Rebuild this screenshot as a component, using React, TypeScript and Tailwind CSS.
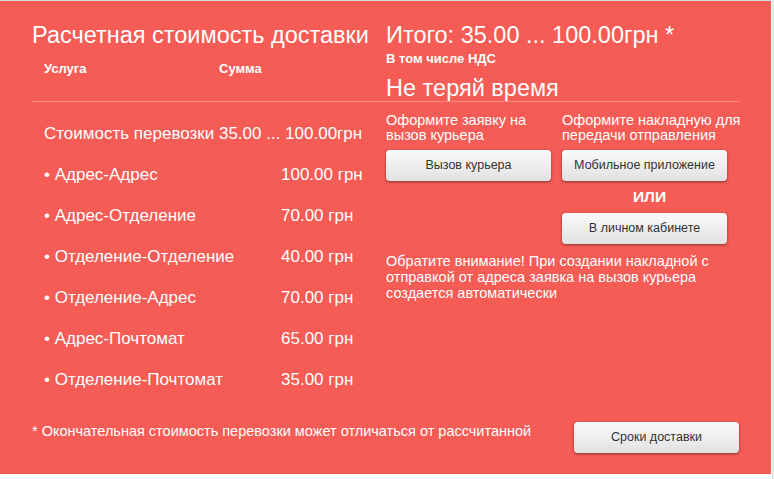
import React from 'react';

const rows = [
  { name: 'Адрес-Адрес', price: '100.00 грн' },
  { name: 'Адрес-Отделение', price: '70.00 грн' },
  { name: 'Отделение-Отделение', price: '40.00 грн' },
  { name: 'Отделение-Адрес', price: '70.00 грн' },
  { name: 'Адрес-Почтомат', price: '65.00 грн' },
  { name: 'Отделение-Почтомат', price: '35.00 грн' },
];

function GrayButton({ children, className = '' }: { children: React.ReactNode; className?: string }) {
  return (
    <button
      className={`h-[31px] w-[165px] rounded-[4px] bg-gradient-to-b from-[#fbfbfb] to-[#e1e1e1] text-[12.5px] text-[#333] shadow-[0_1px_3px_rgba(0,0,0,0.45)] ${className}`}
    >
      {children}
    </button>
  );
}

export default function App() {
  return (
    <div className="w-[774px] h-[479px] bg-white border-r-2 border-[#e6e6e6] font-['Liberation_Sans',Arial,sans-serif]">
      <div className="w-[771px] h-[474px] bg-[#f45c55] border-t border-[#d9d9d9] text-white pl-[32px] pt-[19px]">
        {/* header */}
        <div className="flex">
          <div className="w-[354px]">
            <h1 className="text-[23.5px] leading-[30px]">Расчетная стоимость доставки</h1>
            <div className="flex text-[13px] font-semibold mt-[9px] pl-[12px]">
              <span className="w-[175px]">Услуга</span>
              <span>Сумма</span>
            </div>
          </div>
          <div>
            <div className="text-[23.5px] leading-[30px]">Итого: 35.00 ... 100.00грн *</div>
            <div className="text-[13px] font-semibold leading-[13px] mt-[2px]">В том числе НДС</div>
            <div className="text-[23.5px] leading-[30px] mt-[8px]">Не теряй время</div>
          </div>
        </div>
        <div className="h-px bg-[#f88780] mt-[-2px] w-[708px]" />

        {/* body */}
        <div className="flex">
          <div className="w-[354px] pl-[12px] pt-[19px] text-[17px] leading-[25px]">
            <div className="h-[41px]">Стоимость перевозки 35.00 ... 100.00грн</div>
            {rows.map((r) => (
              <div key={r.name} className="flex h-[41px]">
                <span className="w-[237px]">• {r.name}</span>
                <span>{r.price}</span>
              </div>
            ))}
          </div>
          <div className="pt-[11px] text-[14.5px] leading-[15px]">
            <div className="grid grid-cols-[164px_180px] gap-x-[12px]">
              <div>
                <p>Оформите заявку на вызов курьера</p>
                <GrayButton className="mt-[7px]">Вызов курьера</GrayButton>
              </div>
              <div>
                <p>Оформите накладную для передачи отправления</p>
                <GrayButton className="mt-[7px]">Мобильное приложение</GrayButton>
                <div className="w-[165px] pl-[10px] text-center font-bold text-[15.5px] leading-[18px] mt-[7px]">ИЛИ</div>
                <GrayButton className="mt-[7px]">В личном кабинете</GrayButton>
              </div>
            </div>
            <p className="mt-[9px] w-[350px] leading-[16px]">
              Обратите внимание! При создании накладной с отправкой от адреса заявка на вызов курьера создается автоматически
            </p>
          </div>
        </div>

        {/* footer */}
        <div className="flex justify-between items-start mt-[14px] w-[707px]">
          <p className="text-[14.5px] leading-[16px] pt-[1px]">* Окончательная стоимость перевозки может отличаться от рассчитанной</p>
          <GrayButton>Сроки доставки</GrayButton>
        </div>
      </div>
    </div>
  );
}
